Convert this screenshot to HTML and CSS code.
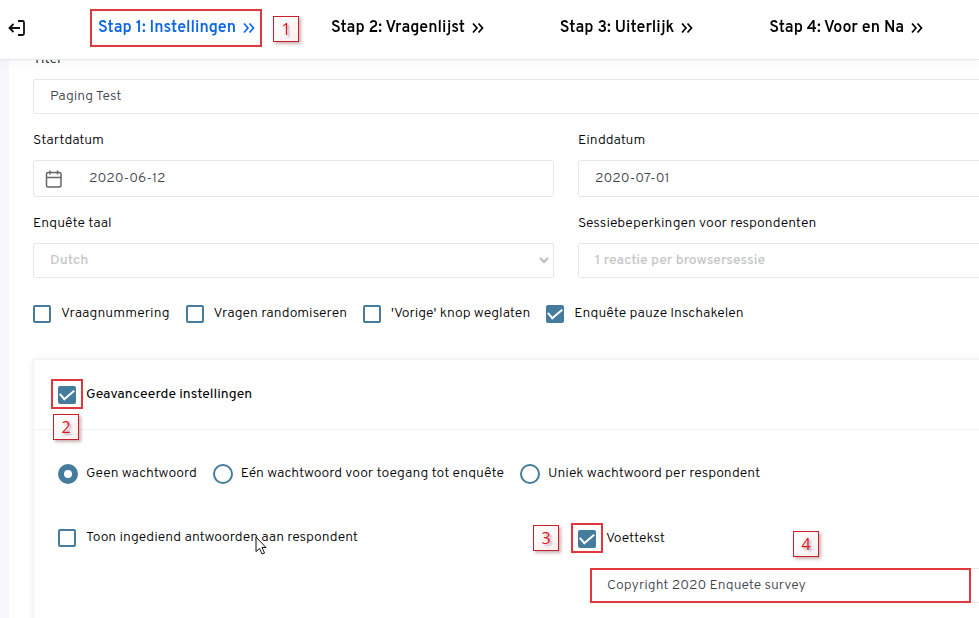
FILE: index.html
```html
<!DOCTYPE html>
<html lang="nl">

<head>
    <meta charset="UTF-8">
    <meta name="viewport" content="width=device-width, initial-scale=1.0">
    <title>Enquête instellingen</title>
    <link rel="stylesheet" href="styles.css">
</head>

<body>
    <header class="topbar">
        <button type="button" class="back" aria-label="Terug">
            <svg width="18" height="18" viewBox="0 0 18 18" fill="none" stroke="currentColor" stroke-width="1.800">
                <path d="M10 2h4.500q1.500 0 1.500 1.500v11q0 1.500-1.500 1.500H10" />
                <path d="M12 9H2M5.500 5L1.500 9l4 4" />
            </svg>
        </button>
        <nav class="steps">
            <a href="#" class="step active">Stap 1: Instellingen
                <svg class="chevrons" viewBox="0 0 12 12"><path d="M1 1.500L5 6l-4 4.500M6.500 1.500l4 4.500-4 4.500" /></svg>
                <span class="mark mark-step"></span>
                <span class="badge badge-1">1</span>
            </a>
            <a href="#" class="step">Stap 2: Vragenlijst
                <svg class="chevrons" viewBox="0 0 12 12"><path d="M1 1.500L5 6l-4 4.500M6.500 1.500l4 4.500-4 4.500" /></svg>
            </a>
            <a href="#" class="step">Stap 3: Uiterlijk
                <svg class="chevrons" viewBox="0 0 12 12"><path d="M1 1.500L5 6l-4 4.500M6.500 1.500l4 4.500-4 4.500" /></svg>
            </a>
            <a href="#" class="step">Stap 4: Voor en Na
                <svg class="chevrons" viewBox="0 0 12 12"><path d="M1 1.500L5 6l-4 4.500M6.500 1.500l4 4.500-4 4.500" /></svg>
            </a>
        </nav>
    </header>

    <main class="panel">
        <form>
            <div class="fields">
                <div class="field wide">
                    <label for="titel">Titel</label>
                    <input type="text" id="titel" value="Paging Test">
                </div>
                <div class="field">
                    <label for="start">Startdatum</label>
                    <div class="date">
                        <svg width="18" height="18" viewBox="0 0 18 18" fill="none" stroke="currentColor" stroke-width="1.500">
                            <rect x="1.500" y="2.500" width="14.500" height="14.500" rx="1.500" />
                            <path d="M1.500 7.500h15M5 .5v4M12.500 .5v4" />
                        </svg>
                        <input type="text" id="start" value="2020-06-12">
                    </div>
                </div>
                <div class="field">
                    <label for="eind">Einddatum</label>
                    <input type="text" id="eind" class="tall" value="2020-07-01">
                </div>
                <div class="field">
                    <label for="taal">Enquête taal</label>
                    <div class="select">
                        <select id="taal" disabled>
                            <option>Dutch</option>
                        </select>
                        <svg class="arrow" viewBox="0 0 10 7"><path d="M1 1l4 4 4-4" /></svg>
                    </div>
                </div>
                <div class="field">
                    <label for="sessie">Sessiebeperkingen voor respondenten</label>
                    <select id="sessie" disabled>
                        <option>1 reactie per browsersessie</option>
                    </select>
                </div>
            </div>

            <div class="options">
                <label class="check"><input type="checkbox">Vraagnummering</label>
                <label class="check"><input type="checkbox">Vragen randomiseren</label>
                <label class="check"><input type="checkbox">'Vorige' knop weglaten</label>
                <label class="check"><input type="checkbox" checked>Enquête pauze Inschakelen</label>
            </div>

            <section class="advanced">
                <div class="advanced-head">
                    <label class="check title"><input type="checkbox" checked>Geavanceerde instellingen
                        <span class="mark mark-check"></span>
                        <span class="badge badge-2">2</span>
                    </label>
                </div>
                <div class="advanced-body">
                    <div class="radios">
                        <label class="radio"><input type="radio" name="wachtwoord" checked>Geen wachtwoord</label>
                        <label class="radio"><input type="radio" name="wachtwoord">Eén wachtwoord voor toegang tot enquête</label>
                        <label class="radio"><input type="radio" name="wachtwoord">Uniek wachtwoord per respondent</label>
                    </div>
                    <div class="columns">
                        <div>
                            <label class="check"><input type="checkbox">Toon ingediend antwoorden aan respondent
                                <svg class="cursor" viewBox="0 0 12 19"><path d="M1 1v14.500l3.500-3 2.500 5.500 2.500-1-2.500-5.500h4z" /></svg>
                            </label>
                        </div>
                        <div>
                            <label class="check"><input type="checkbox" checked>Voettekst
                                <span class="mark mark-check"></span>
                                <span class="badge badge-3">3</span>
                            </label>
                            <div class="footer-text">
                                <input type="text" aria-label="Voettekst" value="Copyright 2020 Enquete survey">
                                <span class="mark mark-input"></span>
                                <span class="badge badge-4">4</span>
                            </div>
                        </div>
                    </div>
                </div>
            </section>
        </form>
    </main>
</body>

</html>
```

FILE: styles.css
```css
* {
    box-sizing: border-box;
}

body {
    margin: 0;
    background-color: #f7f8fb;
    color: #000;
    font-family: Overpass, Inter, sans-serif;
    font-size: 14px;
    font-weight: 300;
    line-height: 20px;
    overflow: hidden;
}

/* top bar */
.topbar {
    position: fixed;
    top: 0;
    left: 0;
    right: 0;
    z-index: 10;
    display: flex;
    align-items: center;
    height: 60px;
    padding: 0 56px 4px 8px;
    background-color: #fff;
    border-bottom: 1px solid #e6e7ea;
    box-shadow: 0 2px 8px rgba(60, 70, 110, 0.06);
}

.back {
    display: flex;
    padding: 0;
    border: none;
    background: none;
    color: #111;
    cursor: pointer;
}

.steps {
    flex: 1;
    display: flex;
    justify-content: space-between;
    margin-left: 72px;
}

.step {
    position: relative;
    display: flex;
    align-items: center;
    gap: 7px;
    color: #000;
    font-size: 16px;
    font-weight: 600;
    text-decoration: none;
}

.step.active {
    color: #0b66e4;
}

.chevrons {
    width: 12px;
    height: 12px;
    fill: none;
    stroke: currentColor;
    stroke-width: 1.7;
}

/* form */
.panel {
    min-height: 100vh;
    margin-left: 9px;
    margin-right: -120px;
    padding: 50px 0 0 24px;
    background-color: #fff;
}

.fields {
    display: grid;
    grid-template-columns: 1fr 1fr;
    gap: 17px 24px;
}

.wide {
    grid-column: span 2;
}

.field > label {
    display: block;
    margin-bottom: 9px;
}

input[type="text"],
select {
    display: block;
    width: 100%;
    height: 35px;
    padding: 0 16px;
    border: 1px solid #e6e7e9;
    border-radius: 2px;
    background-color: #fff;
    color: #40444c;
    font: inherit;
    outline: none;
}

select {
    appearance: none;
}

select:disabled {
    color: #c4c6c8;
    font-weight: 500;
    opacity: 1;
}

input.tall {
    height: 37px;
}

.date {
    display: flex;
    align-items: center;
    height: 37px;
    padding-left: 11px;
    border: 1px solid #e6e7e9;
    border-radius: 3px;
    color: #666;
}

.date input[type="text"] {
    flex: 1;
    padding-left: 26px;
    border: none;
}

.select {
    position: relative;
}

.arrow {
    position: absolute;
    right: 5px;
    top: 14px;
    width: 10px;
    height: 7px;
    fill: none;
    stroke: #bbb;
    stroke-width: 2;
}

.options,
.radios {
    display: flex;
    gap: 16px;
}

.options {
    margin-top: 26px;
}

.check,
.radio {
    position: relative;
    display: inline-flex;
    align-items: center;
    white-space: nowrap;
}

.check {
    gap: 10px;
}

.radio {
    gap: 8px;
}

input[type="checkbox"] {
    appearance: none;
    width: 18px;
    height: 18px;
    margin: 0;
    border: 2px solid #457b9d;
    border-radius: 2px;
    background-color: #fff;
}

input[type="checkbox"]:checked {
    display: grid;
    place-items: center;
    background-color: #457b9d;
}

input[type="checkbox"]:checked::before {
    content: "";
    width: 12px;
    height: 6px;
    margin-top: -4px;
    border-left: 2px solid #fff;
    border-bottom: 2px solid #fff;
    transform: rotate(-40deg);
}

input[type="radio"] {
    appearance: none;
    width: 20px;
    height: 20px;
    margin: 0;
    border: 2px solid #457b9d;
    border-radius: 50%;
    background-color: #fff;
}

input[type="radio"]:checked {
    border-width: 6px;
}

/* advanced settings */
.advanced {
    min-height: 280px;
    margin-top: 35px;
    border: 1px solid #f1f2f4;
    box-shadow: 0 0 8px rgba(60, 70, 110, 0.08);
}

.advanced-head {
    padding: 24px;
    border-bottom: 1px solid #f1f2f4;
}

.title {
    font-weight: 400;
}

.advanced-body {
    padding: 34px 24px;
}

.columns {
    display: grid;
    grid-template-columns: 1fr 1fr;
    gap: 24px;
    margin-top: 44px;
}

.footer-text {
    position: relative;
    margin: 19px 0 0 12px;
}

/* red marks and numbers over the form */
.mark {
    position: absolute;
    border: 2px solid #e0383e;
    pointer-events: none;
}

.mark-step {
    inset: -9px -7px -9px -8px;
}

.mark-check {
    left: -7px;
    top: -6px;
    width: 32px;
    height: 30px;
}

.mark-input {
    inset: 0 103px 0 0;
}

.badge {
    position: absolute;
    width: 26px;
    height: 26px;
    border: 1px solid #c9202b;
    background: linear-gradient(135deg, #fff, #fbeeee);
    box-shadow: 2px 2px 3px rgba(120, 60, 60, 0.4);
    color: #e0141e;
    font-family: "Open Sans", sans-serif;
    font-size: 16px;
    font-weight: 400;
    line-height: 24px;
    text-align: center;
    text-shadow: 2px 2px 2px rgba(60, 70, 100, 0.4);
}

.badge-1 {
    left: calc(100% + 18px);
    top: -2px;
}

.badge-2 {
    left: -5px;
    top: 29px;
}

.badge-3 {
    left: -45px;
    top: -4px;
}

.badge-4 {
    left: 203px;
    top: -37px;
}

.cursor {
    position: absolute;
    left: 197px;
    top: 8px;
    width: 12px;
    height: 19px;
    fill: #fff;
    stroke: #111;
}
```
